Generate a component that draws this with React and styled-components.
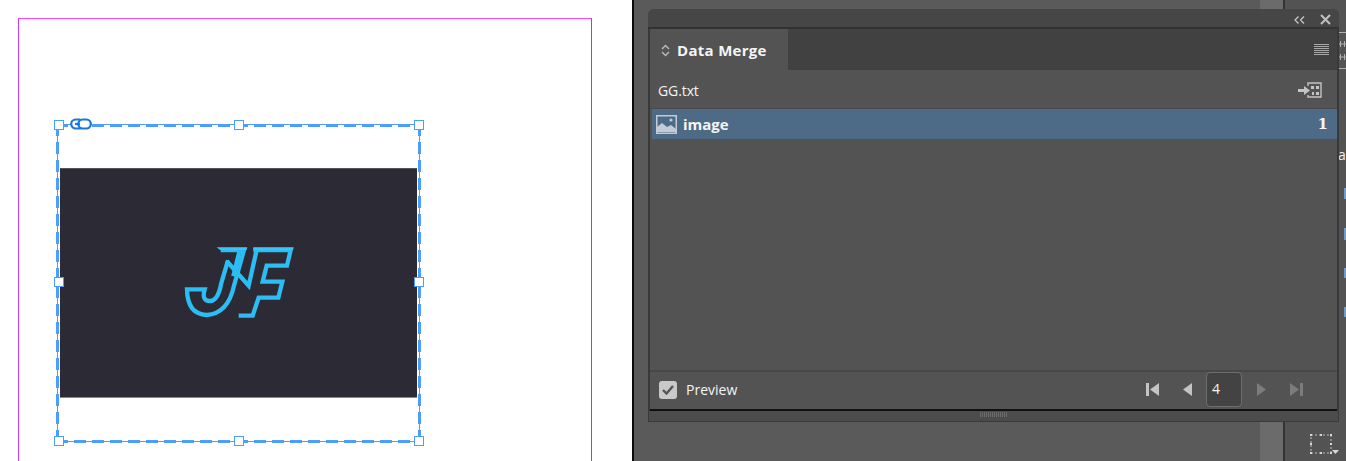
import React from 'react'
import styled, { createGlobalStyle } from 'styled-components'

const Global = createGlobalStyle`
  html, body { margin: 0; padding: 0; background: #fff; }
  #root { height: 461px; overflow: hidden; }
`

const App_ = styled.div`
  display: flex;
  width: 1346px;
  height: 461px;
  overflow: hidden;
  font-family: "Open Sans", "Noto Sans", sans-serif;
`

// left side, the document
const Canvas = styled.div`
  width: 632px;
  flex: none;
  background: #fff;
  padding: 18px 0 0 18px;
  box-sizing: border-box;
`
const Page = styled.div`
  width: 574px;
  height: 520px;
  box-sizing: border-box;
  padding: 105px 0 0 38px;
  border-top: 1px solid #ff44ff;
  border-left: 1px solid #c23cff;
  border-right: 1px solid #a040e0;
`
const Selection = styled.div`
  position: relative;
  width: 363px;
  height: 318px;
  box-sizing: border-box;
  border: 1px solid #4d9dff;
  padding: 43px 0 0 2px;
  &::after {
    content: '';
    position: absolute;
    inset: -1px -2px -2px -2px;
    background:
      repeating-linear-gradient(90deg, #4d9dff 0 12px, transparent 12px 18px) top / 100% 3px no-repeat,
      repeating-linear-gradient(90deg, #4d9dff 0 12px, transparent 12px 18px) bottom / 100% 3px no-repeat,
      repeating-linear-gradient(180deg, #4d9dff 0 12px, transparent 12px 18px) left / 3px 100% no-repeat,
      repeating-linear-gradient(180deg, #4d9dff 0 12px, transparent 12px 18px) right / 3px 100% no-repeat;
  }
`
const Picture = styled.div`
  width: 357px;
  height: 230px;
  box-sizing: border-box;
  background: #2c2a35;
  border-top: 1px solid #55545a;
  border-bottom: 1px solid #8a8a8c;
  display: flex;
  align-items: center;
  justify-content: center;
`
const Handle = styled.span`
  position: absolute;
  z-index: 2;
  width: 10px;
  height: 10px;
  box-sizing: border-box;
  background: #fff;
  border: 1.5px solid #4d9dff;
  left: ${p => p.$x};
  top: ${p => p.$y};
  transform: translate(-50%, -50%);
`
const Link = styled.svg`
  position: absolute;
  z-index: 2;
  left: 12px;
  top: -7px;
`

// right side, the app chrome
const Divider = styled.div`
  width: 2px;
  flex: none;
  background: #0c0c0c;
`
const Workspace = styled.div`
  position: relative;
  flex: 1;
  display: flex;
  background: #5a5a5a;
`
const DocArea = styled.div`
  width: 626px;
  flex: none;
`
const Strip = styled.div`
  width: 23px;
  flex: none;
  background: #6b6b6b;
  border-right: 2px solid #333;
`
const ToolColumn = styled.div`
  flex: 1;
  display: flex;
  flex-direction: column;
  background: #535353;
  padding-top: 32px;
  box-sizing: border-box;
`
const Rail = styled.div`
  padding-left: 54px;
  overflow: hidden;
  height: 300px;
  color: #f0f0f0;
  font-size: 14px;
`
const RailTicks = styled.svg`
  display: block;
`
const RailLetter = styled.div`
  margin-top: 73px;
  height: 19px;
  line-height: 19px;
  margin-left: -1px;
`
const RailBits = styled.svg`
  display: block;
`
const Transform = styled.svg`
  margin: auto 0 5px 24px;
`

const Panel = styled.div`
  position: absolute;
  left: 14px;
  top: 9px;
  width: 691px;
  height: 413px;
  box-sizing: border-box;
  display: flex;
  flex-direction: column;
  background: #535353;
  border-radius: 6px 6px 0 0;
  color: #f4f4f4;
  box-shadow: inset 0 0 0 1px #4a4a4a;
`
const TitleBar = styled.div`
  height: 15px;
  padding: 3px 8px 0 0;
  flex: none;
  display: flex;
  align-items: center;
  justify-content: flex-end;
  gap: 15px;
  background: #464646;
  border-radius: 6px 6px 0 0;
  border-bottom: 2px solid #323232;
`
const TabBar = styled.div`
  height: 41px;
  flex: none;
  display: flex;
  justify-content: space-between;
  align-items: center;
  padding-right: 8px;
  background: #414141;
  border-left: 2px solid #393939;
  border-right: 2px solid #393939;
`
const Tab = styled.div`
  width: 138px;
  height: 100%;
  box-sizing: border-box;
  display: flex;
  align-items: center;
  gap: 7px;
  padding: 1px 0 0 11px;
  background: #535353;
  font-size: 15px;
  font-weight: 700;
  letter-spacing: 0.3px;
`
const Body = styled.div`
  flex: 1;
  min-height: 0;
  display: flex;
  flex-direction: column;
  border-left: 2px solid #393939;
  border-right: 2px solid #393939;
`
const FileRow = styled.div`
  height: 38px;
  flex: none;
  box-sizing: border-box;
  display: flex;
  align-items: center;
  justify-content: space-between;
  padding: 2px 15px 0 8px;
  font-size: 14px;
  letter-spacing: -0.1px;
`
const List = styled.div`
  flex: 1;
  padding: 0 0 0 2px;
  border-top: 1px solid #484848;
`
const ListItem = styled.div`
  height: 30px;
  display: flex;
  align-items: center;
  gap: 6px;
  padding: 0 9px 0 4px;
  background: #4d6a87;
  font-size: 15px;
  font-weight: 700;
`
const ItemName = styled.span`
  flex: 1;
`
const ItemCount = styled.span`
  font-family: "DejaVu Serif", serif;
  font-size: 15px;
  font-weight: 700;
`
const Footer = styled.div`
  height: 41px;
  flex: none;
  box-sizing: border-box;
  display: flex;
  align-items: center;
  justify-content: space-between;
  padding: 0 34px 2px 9px;
  border-top: 2px solid #484848;
  border-bottom: 2px solid #111;
`
const Preview = styled.label`
  display: flex;
  align-items: center;
  gap: 9px;
  font-size: 14px;
`
const Check = styled.span`
  width: 18px;
  height: 18px;
  border-radius: 3px;
  background: #c9c9c9;
  display: flex;
  align-items: center;
  justify-content: center;
`
const Nav = styled.div`
  display: flex;
  align-items: center;
`
const NavIcon = styled.svg`
  margin-left: ${p => p.$gap || 0}px;
`
const PageInput = styled.div`
  width: 36px;
  height: 35px;
  margin-left: 14px;
  box-sizing: border-box;
  padding-left: 5px;
  line-height: 32px;
  font-size: 14px;
  background: #434343;
  border: 1px solid #6e6e6e;
  border-radius: 4px;
`
const Gripper = styled.div`
  height: 11px;
  flex: none;
  display: flex;
  justify-content: center;
  padding-top: 1px;
  box-sizing: border-box;
  background: #4c4c4c;
  border: 1px solid #3a3a3a;
  border-top: 0;
`
const GripLines = styled.div`
  width: 28px;
  height: 5px;
  background: repeating-linear-gradient(90deg, #6d6d6d 0 1px, transparent 1px 2px);
`

function Logo() {
  return (
    <svg width="110" height="72" viewBox="40 34 330 216" fill="none" stroke="#2bbdf3" strokeWidth="13" strokeLinejoin="miter">
      {/* J */}
      <path d="M150 43 L220 43 L190 150 Q172 234 108 238 Q50 236 49 161 L102 161 Q92 196 118 196 Q142 196 152 142 L172 74" />
      {/* N */}
      <path d="M168 76 L234 150 L258 43" />
      <path d="M206 48 L188 122" />
      {/* F */}
      <path d="M248 43 H360 L349 90 H288 L276 138 H335 L323 186 H264 L246 240 H204" />
      <path d="M138 35 H230 L228 43 H148 Z M248 35 H369 L367 43 H248 Z" fill="#39c6f7" stroke="none" />
    </svg>
  )
}

function NavButton({ kind, dim, gap }) {
  const c = dim ? '#7c7c7c' : '#c4c4c4'
  const shapes = {
    first: <><rect x="0" y="0" width="3" height="13" /><path d="M13 0V13L4 6.5Z" /></>,
    prev: <path d="M9 0V13L0 6.5Z" />,
    next: <path d="M0 0V13L9 6.5Z" />,
    last: <><rect x="10" y="0" width="3" height="13" /><path d="M0 0V13L9 6.5Z" /></>,
  }
  const w = kind === 'first' || kind === 'last' ? 13 : 9
  return (
    <NavIcon $gap={gap} width={w} height="13" viewBox={`0 0 ${w} 13`} fill={c}>
      {shapes[kind]}
    </NavIcon>
  )
}

export default function App() {
  const midY = 'calc(50% - 1px)'
  const handles = [
    ['1px', '0px'], ['50%', '0px'], ['100%', '0px'],
    ['1px', midY], ['100%', midY],
    ['1px', '100%'], ['50%', '100%'], ['100%', '100%'],
  ]
  return (
    <App_>
      <Global />
      <Canvas>
        <Page>
          <Selection>
            <Picture>
              <Logo />
            </Picture>
            {handles.map(([x, y], i) => <Handle key={i} $x={x} $y={y} />)}
            <Link width="22" height="12" viewBox="0 0 22 12" fill="#fff" stroke="#1a76e0" strokeWidth="2.2">
              <rect x="1.2" y="1.5" width="12.5" height="9" rx="4.5" />
              <rect x="8.3" y="1.5" width="12.5" height="9" rx="4.5" />
              <path d="M5 6H10" fill="none" />
            </Link>
          </Selection>
        </Page>
      </Canvas>
      <Divider />
      <Workspace>
        <DocArea />
        <Strip />
        <ToolColumn>
          <Rail>
            <RailTicks width="7" height="40" viewBox="0 0 7 40" fill="none" stroke="#b0b0b0">
              <path d="M0 .5H7M1.5 9V15M5.5 9V15M0 12H7M1.5 22V28M5.5 22V28M0 25H7M0 36.5H7" />
            </RailTicks>
            <RailLetter>a</RailLetter>
            <RailBits width="7" height="160" viewBox="0 0 7 160" fill="#6f9cc9">
              <rect x="5" y="24" width="2" height="11" />
              <rect x="5" y="64" width="2" height="12" />
              <rect x="5" y="104" width="2" height="10" />
              <rect x="5" y="143" width="2" height="10" />
            </RailBits>
          </Rail>
          <Transform width="31" height="24" viewBox="0 0 31 24" fill="none">
            <rect x="2" y="3" width="20" height="18" stroke="#bdbdbd" strokeDasharray="2 2" />
            <g fill="#d8d8d8">
              <rect x="1" y="2" width="2" height="2" /><rect x="11" y="2" width="2" height="2" /><rect x="21" y="2" width="2" height="2" />
              <rect x="1" y="11" width="2" height="2" /><rect x="21" y="11" width="2" height="2" />
              <rect x="1" y="20" width="2" height="2" /><rect x="11" y="20" width="2" height="2" /><rect x="21" y="20" width="2" height="2" />
              <path d="M23 18H30L26.5 22Z" />
            </g>
          </Transform>
        </ToolColumn>

        <Panel>
          <TitleBar>
            <svg width="11" height="8" viewBox="0 0 11 8" fill="none" stroke="#c8c8c8" strokeWidth="1.3">
              <path d="M4.5 .5L1 4L4.5 7.5M10 .5L6.5 4L10 7.5" />
            </svg>
            <svg width="11" height="11" viewBox="0 0 11 11" fill="none" stroke="#c0c0c0" strokeWidth="2">
              <path d="M1 1L10 10M10 1L1 10" />
            </svg>
          </TitleBar>
          <TabBar>
            <Tab>
              <svg width="9" height="13" viewBox="0 0 9 13" fill="none" stroke="#b8b8b8" strokeWidth="1.5">
                <path d="M1 5L4.5 1.5L8 5M1 8L4.5 11.5L8 8" />
              </svg>
              Data Merge
            </Tab>
            <svg width="15" height="11" viewBox="0 0 15 11" fill="#a8a8a8">
              <rect y="0" width="15" height="1" /><rect y="2" width="15" height="1" />
              <rect y="4" width="15" height="1" /><rect y="6" width="15" height="1" />
              <rect y="8" width="15" height="1" /><rect y="10" width="15" height="1" />
            </svg>
          </TabBar>
          <Body>
            <FileRow>
              GG.txt
              <svg width="24" height="16" viewBox="0 0 24 16" fill="none">
                <path d="M0 7H6V4L12 8.5L6 13V10H0Z" fill="#c4c4c4" />
                <path d="M10 4V1H23V15H10V13" stroke="#c4c4c4" strokeWidth="1.4" />
                <g fill="#c4c4c4">
                  <rect x="13" y="4" width="3" height="3" /><rect x="18" y="4" width="3" height="3" />
                  <rect x="14" y="10" width="2" height="3" /><rect x="18" y="10" width="3" height="3" />
                </g>
              </svg>
            </FileRow>
            <List>
              <ListItem>
                <svg width="21" height="19" viewBox="0 0 21 19">
                  <rect width="21" height="19" fill="#c3ccd6" />
                  <rect x="1.5" y="1.5" width="18" height="16" fill="#4d6a87" />
                  <path d="M1 17V12L6 8L11 12L15 10L20 14V17Z" fill="#c3ccd6" />
                  <circle cx="15" cy="5" r="1.6" fill="#c3ccd6" />
                </svg>
                <ItemName>image</ItemName>
                <ItemCount>1</ItemCount>
              </ListItem>
            </List>
            <Footer>
              <Preview>
                <Check>
                  <svg width="12" height="10" viewBox="0 0 12 10" fill="none" stroke="#555" strokeWidth="2.4">
                    <path d="M1 5L4.5 8.5L11 1" />
                  </svg>
                </Check>
                Preview
              </Preview>
              <Nav>
                <NavButton kind="first" />
                <NavButton kind="prev" gap={24} />
                <PageInput>4</PageInput>
                <NavButton kind="next" dim gap={15} />
                <NavButton kind="last" dim gap={24} />
              </Nav>
            </Footer>
          </Body>
          <Gripper><GripLines /></Gripper>
        </Panel>
      </Workspace>
    </App_>
  )
}
